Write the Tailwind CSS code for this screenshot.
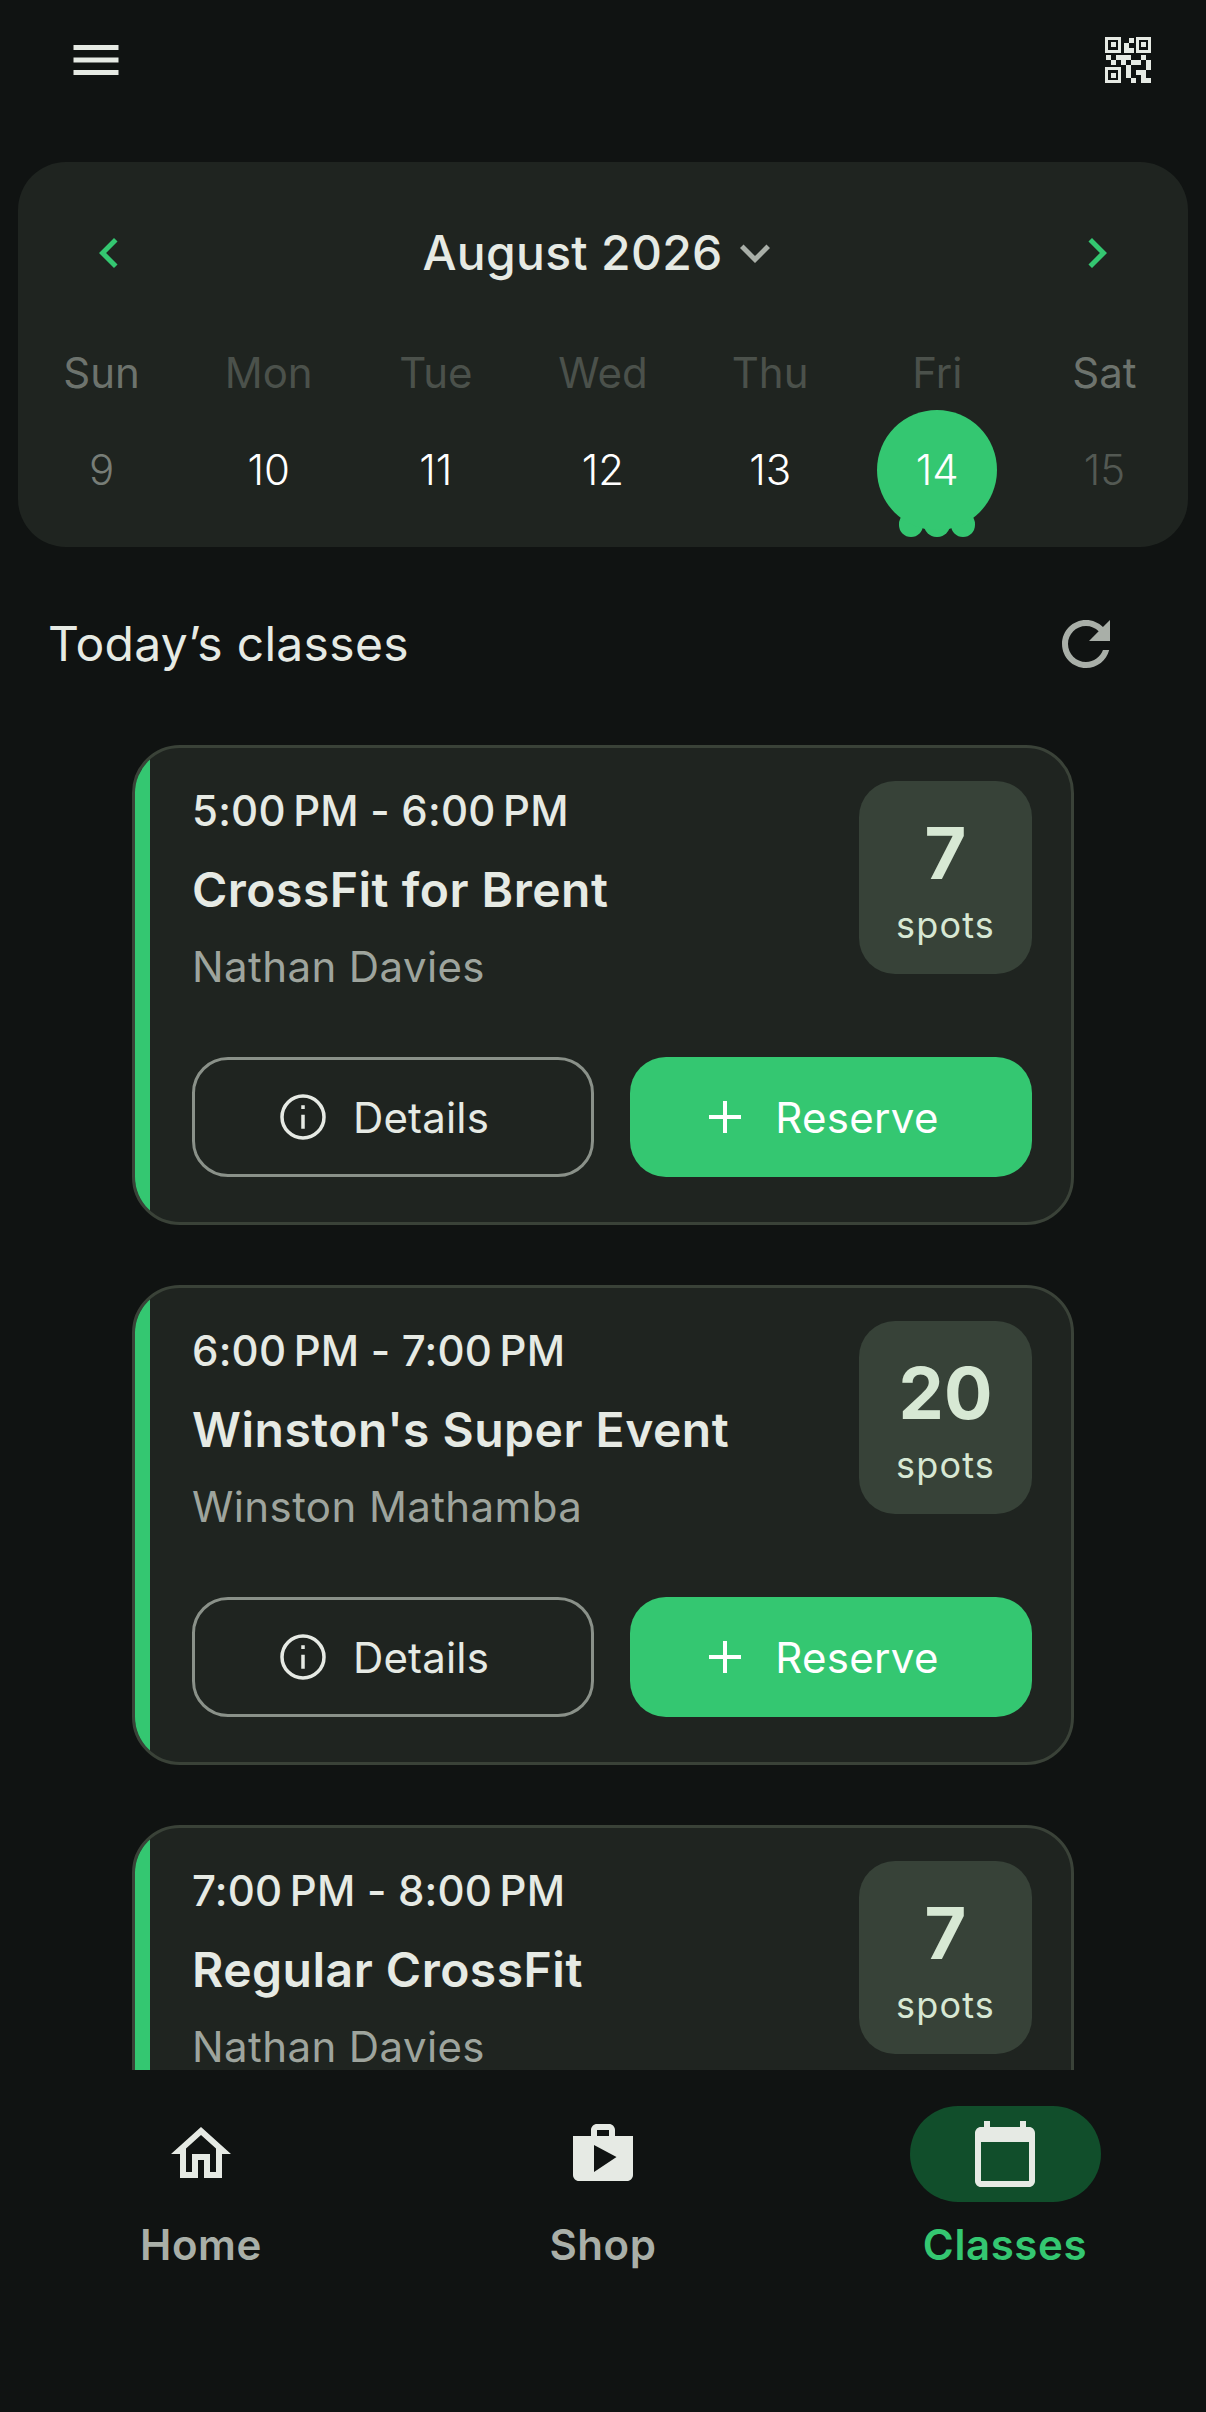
<!DOCTYPE html>
<html lang="en">
<head>
<meta charset="utf-8">
<title>Classes</title>
<script src="https://cdn.jsdelivr.net/npm/@tailwindcss/browser@4"></script>
</head>
<body class="m-0 bg-[#101312]">
<div class="w-[1206px] h-[2412px] flex flex-col overflow-hidden bg-[#101312] text-[#e6eae4] font-['Inter',sans-serif]">

  <!-- top bar -->
  <div class="h-[162px] shrink-0 flex justify-between items-start pl-[66px] pr-[55px] pt-[30px]">
    <svg class="w-[60px] h-[60px]" viewBox="0 0 24 24" fill="#e6eae4"><path d="M3 18h18v-2H3v2zm0-5h18v-2H3v2zm0-5h18V6H3v2z"/></svg>
    <svg class="w-[46px] h-[46px] mt-[7px]" viewBox="135 50 137 138" fill="#e6eae4" shape-rendering="crispEdges">
      <path fill-rule="evenodd" d="M135 50h47v47h-47zM144 59v29h29v-29zM151 66h15v15h-15zM226 50h47v47h-47zM235 59v29h29v-29zM242 66h15v15h-15zM135 141h47v47h-47zM144 150v29h29v-29zM151 157h15v15h-15z"/>
      <rect x="205" y="52" width="15" height="15"/><rect x="190" y="67" width="15" height="15"/><rect x="190" y="82" width="30" height="15"/>
      <rect x="136" y="105" width="15" height="15"/><rect x="167" y="105" width="45" height="15"/><rect x="242" y="105" width="15" height="15"/>
      <rect x="151" y="120" width="15" height="15"/><rect x="182" y="120" width="15" height="15"/><rect x="212" y="120" width="30" height="15"/><rect x="257" y="120" width="15" height="30"/>
      <rect x="197" y="135" width="15" height="37"/><rect x="227" y="150" width="30" height="15"/><rect x="242" y="165" width="15" height="8"/>
      <rect x="212" y="172" width="15" height="16"/><rect x="242" y="172" width="30" height="16"/>
    </svg>
  </div>

  <!-- calendar -->
  <section class="shrink-0 mx-[18px] h-[385px] rounded-[48px] bg-[#1f2420] overflow-hidden">
    <div class="h-[182px] flex items-center justify-between pl-[79px] pr-[61px]">
      <svg class="w-[60px] h-[60px] -ml-[18px]" viewBox="0 0 24 24" fill="#34c771"><path d="M15.41 7.41L14 6l-6 6 6 6 1.41-1.41L10.83 12z"/></svg>
      <div class="flex items-center gap-[2px] mr-[14px] text-[48px] font-medium tracking-[0.3px]">
        <span>August 2026</span>
        <svg class="w-[60px] h-[60px] -mr-[15px]" viewBox="0 0 24 24" fill="#a9afa8"><path d="M16.59 8.59L12 13.17 7.41 8.59 6 10l6 6 6-6z"/></svg>
      </div>
      <svg class="w-[60px] h-[60px]" viewBox="0 0 24 24" fill="#34c771"><path d="M8.59 16.59L10 18l6-6-6-6-1.41 1.41L13.17 12z"/></svg>
    </div>
    <div class="grid grid-cols-7 text-center text-[42px] leading-[60px] h-[60px] mt-[-1px]">
      <span class="text-[#6d736d]">Sun</span>
      <span class="text-[#4b514b]">Mon</span>
      <span class="text-[#4b514b]">Tue</span>
      <span class="text-[#4b514b]">Wed</span>
      <span class="text-[#4b514b]">Thu</span>
      <span class="text-[#4b514b]">Fri</span>
      <span class="text-[#6d736d]">Sat</span>
    </div>
    <div class="grid grid-cols-7 text-center text-[42px] font-light leading-[120px] h-[120px] mt-[7px]">
      <span class="text-[#777d77]">9</span>
      <span class="text-white">10</span>
      <span class="text-white">11</span>
      <span class="text-white">12</span>
      <span class="text-white">13</span>
      <span class="relative text-white">
        <span class="absolute left-[45px] top-[102px] w-[24px] h-[25px] rounded-full bg-[#34c771]"></span>
        <span class="absolute left-[70px] top-[102px] w-[26px] h-[25px] rounded-full bg-[#34c771]"></span>
        <span class="absolute left-[97px] top-[102px] w-[24px] h-[25px] rounded-full bg-[#34c771]"></span>
        <span class="relative block mx-auto w-[120px] h-[120px] rounded-full bg-[#34c771]">14</span>
      </span>
      <span class="text-[#535953]">15</span>
    </div>
  </section>

  <!-- heading -->
  <div class="h-[198px] shrink-0 flex items-center justify-between pl-[48px] pr-[84px] pb-[5px]">
    <h2 class="text-[48px] font-normal tracking-[0.3px]">Today’s classes</h2>
    <svg class="w-[72px] h-[72px]" viewBox="0 0 24 24" fill="#a9afa8"><path d="M17.65 6.35C16.2 4.9 14.21 4 12 4c-4.42 0-7.99 3.58-7.99 8s3.57 8 7.99 8c3.73 0 6.84-2.55 7.73-6h-2.08c-.82 2.33-3.04 4-5.65 4-3.31 0-6-2.69-6-6s2.69-6 6-6c1.66 0 3.14.69 4.22 1.78L13 11h7V4l-2.35 2.35z"/></svg>
  </div>

  <!-- class list -->
  <div class="h-[1325px] shrink-0 overflow-hidden px-[132px] flex flex-col gap-[60px]">

    <article class="shrink-0 h-[480px] flex rounded-[48px] border-[3px] border-[#3a4238] bg-[#1f2420] overflow-hidden">
      <div class="w-[15px] shrink-0 bg-[#34c771]"></div>
      <div class="flex-1 pl-[42px] pr-[39px] pt-[33px]">
        <div class="flex justify-between items-start h-[216px]">
          <div>
            <div class="text-[42px] leading-[60px] font-medium tracking-[0.2px]">5:00&#8239;PM - 6:00&#8239;PM</div>
            <div class="text-[48px] leading-[60px] mt-[19px] font-semibold tracking-[0.5px]">CrossFit for Brent</div>
            <div class="text-[42px] leading-[60px] mt-[17px] text-[#9ea49d] tracking-[0.4px]">Nathan Davies</div>
          </div>
          <div class="w-[173px] h-[193px] rounded-[36px] bg-[#374238] flex flex-col items-center text-[#d7e8d4]">
            <span class="text-[72px] leading-[72px] font-bold mt-[36px]">7</span>
            <span class="text-[36px] leading-[44px] mt-[14px] tracking-[1.2px]">spots</span>
          </div>
        </div>
        <div class="grid grid-cols-2 gap-[36px] mt-[60px]">
          <div class="h-[120px] rounded-[36px] border-[3px] border-[#8a9189] flex items-center justify-center gap-[22px] pr-[22px] text-[42px] tracking-[0.2px]">
            <svg class="w-[56px] h-[56px]" viewBox="0 0 24 24" fill="none" stroke="#e6eae4" stroke-width="1.5"><circle cx="12" cy="12" r="9"/><path d="M12 11v6M12 7v1.6"/></svg>
            <span>Details</span>
          </div>
          <div class="h-[120px] rounded-[36px] bg-[#34c771] flex items-center justify-center gap-[26px] pr-[22px] text-[42px] tracking-[0.3px] text-white">
            <svg class="w-[48px] h-[48px]" viewBox="0 0 24 24" fill="none" stroke="#ffffff" stroke-width="2"><path d="M12 4v16M4 12h16"/></svg>
            <span>Reserve</span>
          </div>
        </div>
      </div>
    </article>

    <article class="shrink-0 h-[480px] flex rounded-[48px] border-[3px] border-[#3a4238] bg-[#1f2420] overflow-hidden">
      <div class="w-[15px] shrink-0 bg-[#34c771]"></div>
      <div class="flex-1 pl-[42px] pr-[39px] pt-[33px]">
        <div class="flex justify-between items-start h-[216px]">
          <div>
            <div class="text-[42px] leading-[60px] font-medium tracking-[0.2px]">6:00&#8239;PM - 7:00&#8239;PM</div>
            <div class="text-[48px] leading-[60px] mt-[19px] font-semibold tracking-[0.5px]">Winston's Super Event</div>
            <div class="text-[42px] leading-[60px] mt-[17px] text-[#9ea49d] tracking-[0.4px]">Winston Mathamba</div>
          </div>
          <div class="w-[173px] h-[193px] rounded-[36px] bg-[#374238] flex flex-col items-center text-[#d7e8d4]">
            <span class="text-[72px] leading-[72px] font-bold mt-[36px]">20</span>
            <span class="text-[36px] leading-[44px] mt-[14px] tracking-[1.2px]">spots</span>
          </div>
        </div>
        <div class="grid grid-cols-2 gap-[36px] mt-[60px]">
          <div class="h-[120px] rounded-[36px] border-[3px] border-[#8a9189] flex items-center justify-center gap-[22px] pr-[22px] text-[42px] tracking-[0.2px]">
            <svg class="w-[56px] h-[56px]" viewBox="0 0 24 24" fill="none" stroke="#e6eae4" stroke-width="1.5"><circle cx="12" cy="12" r="9"/><path d="M12 11v6M12 7v1.6"/></svg>
            <span>Details</span>
          </div>
          <div class="h-[120px] rounded-[36px] bg-[#34c771] flex items-center justify-center gap-[26px] pr-[22px] text-[42px] tracking-[0.3px] text-white">
            <svg class="w-[48px] h-[48px]" viewBox="0 0 24 24" fill="none" stroke="#ffffff" stroke-width="2"><path d="M12 4v16M4 12h16"/></svg>
            <span>Reserve</span>
          </div>
        </div>
      </div>
    </article>

    <article class="shrink-0 h-[480px] flex rounded-[48px] border-[3px] border-[#3a4238] bg-[#1f2420] overflow-hidden">
      <div class="w-[15px] shrink-0 bg-[#34c771]"></div>
      <div class="flex-1 pl-[42px] pr-[39px] pt-[33px]">
        <div class="flex justify-between items-start h-[216px]">
          <div>
            <div class="text-[42px] leading-[60px] font-medium tracking-[0.2px]">7:00&#8239;PM - 8:00&#8239;PM</div>
            <div class="text-[48px] leading-[60px] mt-[19px] font-semibold tracking-[0.5px]">Regular CrossFit</div>
            <div class="text-[42px] leading-[60px] mt-[17px] text-[#9ea49d] tracking-[0.4px]">Nathan Davies</div>
          </div>
          <div class="w-[173px] h-[193px] rounded-[36px] bg-[#374238] flex flex-col items-center text-[#d7e8d4]">
            <span class="text-[72px] leading-[72px] font-bold mt-[36px]">7</span>
            <span class="text-[36px] leading-[44px] mt-[14px] tracking-[1.2px]">spots</span>
          </div>
        </div>
      </div>
    </article>
  </div>

  <!-- bottom nav -->
  <nav class="flex-1 grid grid-cols-3 text-center text-[42px] font-semibold tracking-[0.6px] text-[#a9afa8] pt-[36px]">
    <div class="flex flex-col items-center">
      <div class="w-[191px] h-[96px] flex items-center justify-center">
        <svg class="w-[72px] h-[72px]" viewBox="0 0 24 24" fill="#e6eae4"><path d="M12 5.69l5 4.5V18h-2v-6H9v6H7v-7.81l5-4.5M12 3L2 12h3v8h6v-6h2v6h6v-8h3L12 3z"/></svg>
      </div>
      <span class="leading-[60px] mt-[13px]">Home</span>
    </div>
    <div class="flex flex-col items-center">
      <div class="w-[191px] h-[96px] flex items-center justify-center">
        <svg class="w-[72px] h-[72px]" viewBox="0 0 24 24" fill="#e6eae4"><path d="M16 6V4c0-1.11-.89-2-2-2h-4c-1.11 0-2 .89-2 2v2H2v13c0 1.11.89 2 2 2h16c1.11 0 2-.89 2-2V6h-6zm-6-2h4v2h-4V4zM9 18V9l7.5 4L9 18z"/></svg>
      </div>
      <span class="leading-[60px] mt-[13px]">Shop</span>
    </div>
    <div class="flex flex-col items-center">
      <div class="w-[191px] h-[96px] rounded-full bg-[#114e2b] flex items-center justify-center">
        <svg class="w-[72px] h-[72px]" viewBox="0 0 24 24" fill="#e6eae4"><path d="M20 3h-1V1h-2v2H7V1H5v2H4c-1.1 0-2 .9-2 2v16c0 1.1.9 2 2 2h16c1.1 0 2-.9 2-2V5c0-1.1-.9-2-2-2zm0 18H4V8h16v13z"/></svg>
      </div>
      <span class="leading-[60px] mt-[13px] text-[#34c771]">Classes</span>
    </div>
  </nav>
</div>
</body>
</html>
